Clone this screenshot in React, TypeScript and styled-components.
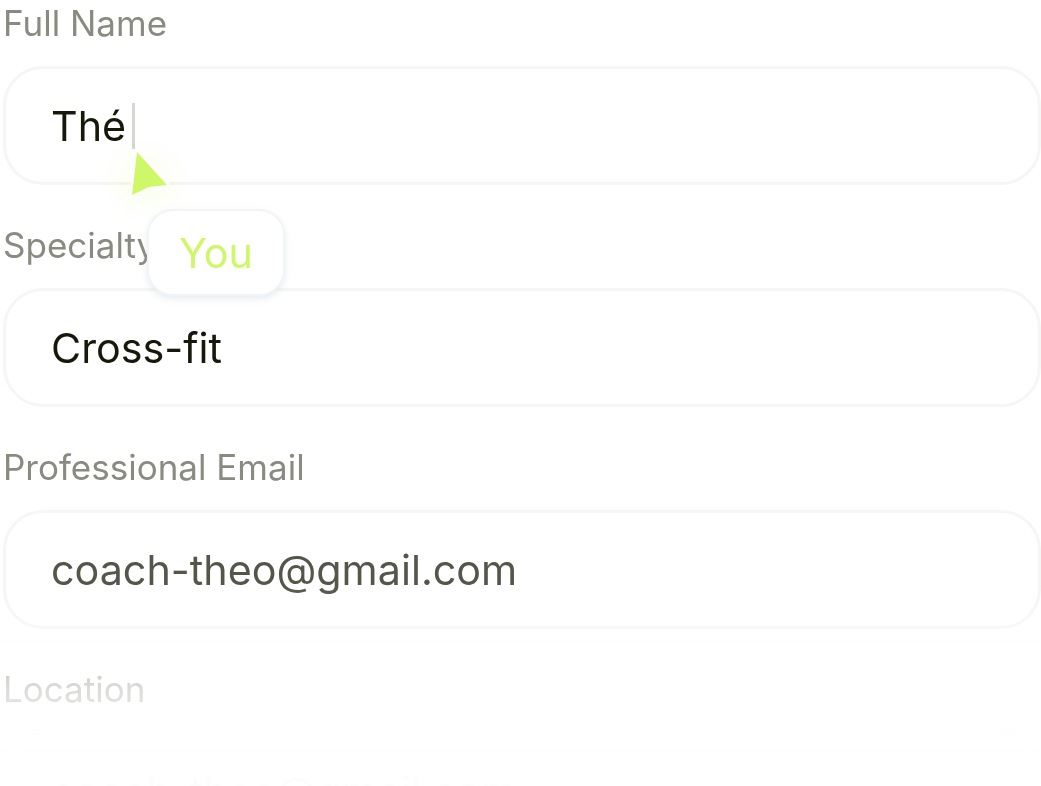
import styled, { createGlobalStyle } from "styled-components";

const GlobalStyle = createGlobalStyle`
  html, body {
    margin: 0;
    padding: 0;
    background: #ffffff;
    font-family: "Inter", "Liberation Sans", sans-serif;
    overflow: hidden;
  }
`;

const Page = styled.div`
  position: relative;
  width: 1041px;
  height: 786px;
  overflow: hidden;
  background: #fff;
`;

const Form = styled.form`
  display: flex;
  flex-direction: column;
  gap: 39px;
  padding: 2px 0 0 3px;
  will-change: transform;
`;

const Field = styled.div`
  display: flex;
  flex-direction: column;
  gap: 20px;
`;

const Label = styled.label`
  height: 44px;
  line-height: 43px;
  font-size: 35px;
  color: #8a8b80;
`;

const InputBox = styled.div`
  box-sizing: border-box;
  height: 119px;
  display: flex;
  align-items: center;
  padding-left: 45px;
  border: 3px solid #f6f6f4;
  border-radius: 40px;
`;

const Value = styled.span<{ $muted?: boolean }>`
  font-size: 41.25px;
  line-height: 50px;
  color: ${(p) => (p.$muted ? "#55564a" : "#14190a")};
`;

const Caret = styled.span`
  display: inline-block;
  width: 3px;
  height: 46px;
  margin-left: 6px;
  background: #d6d6d2;
`;

const Fade = styled.div`
  position: absolute;
  left: 0;
  right: 0;
  bottom: 0;
  height: 200px;
  background: linear-gradient(
    to bottom,
    rgba(255, 255, 255, 0) 0%,
    rgba(255, 255, 255, 0.7) 52%,
    rgba(255, 255, 255, 0.88) 75%,
    rgba(255, 255, 255, 0.985) 97%
  );
  pointer-events: none;
`;

const Pointer = styled.svg`
  position: absolute;
  left: 110px;
  top: 130px;
  width: 80px;
  height: 90px;
  overflow: visible;
`;

const Tag = styled.div`
  position: absolute;
  left: 147px;
  top: 209px;
  box-sizing: border-box;
  width: 138px;
  height: 87px;
  display: flex;
  align-items: center;
  justify-content: center;
  border: 2px solid #f2f5f7;
  border-radius: 26px;
  background: #fff;
  box-shadow: 0 3px 7px rgba(170, 185, 200, 0.28);
  font-size: 41.25px;
  color: #cff868;
  will-change: transform;
`;

const fields = [
  { label: "Full Name", value: "Thé", caret: true },
  { label: "Specialty", value: "Cross-fit" },
  { label: "Professional Email", value: "coach-theo@gmail.com", muted: true },
  { label: "Location", value: "coach-theo@gmail.com", muted: true },
];

function App() {
  return (
    <Page>
      <GlobalStyle />
      <Form>
        {fields.map((f) => (
          <Field key={f.label}>
            <Label>{f.label}</Label>
            <InputBox>
              <Value $muted={f.muted}>{f.value}</Value>
              {f.caret && <Caret />}
            </InputBox>
          </Field>
        ))}
      </Form>
      <Fade />
      <Pointer viewBox="0 0 80 90">
        <defs>
          <radialGradient id="glow">
            <stop offset="0%" stopColor="#cff868" stopOpacity="0.12" />
            <stop offset="100%" stopColor="#cff868" stopOpacity="0" />
          </radialGradient>
        </defs>
        <circle cx="35" cy="50" r="44" fill="url(#glow)" />
        <path
          d="M27 22 L57 55 L39 57 L22 65 Z"
          fill="#cff868"
          stroke="#ffffff"
          strokeWidth="5"
          strokeLinejoin="round"
          paintOrder="stroke"
        />
      </Pointer>
      <Tag>You</Tag>
    </Page>
  );
}

export default App;
